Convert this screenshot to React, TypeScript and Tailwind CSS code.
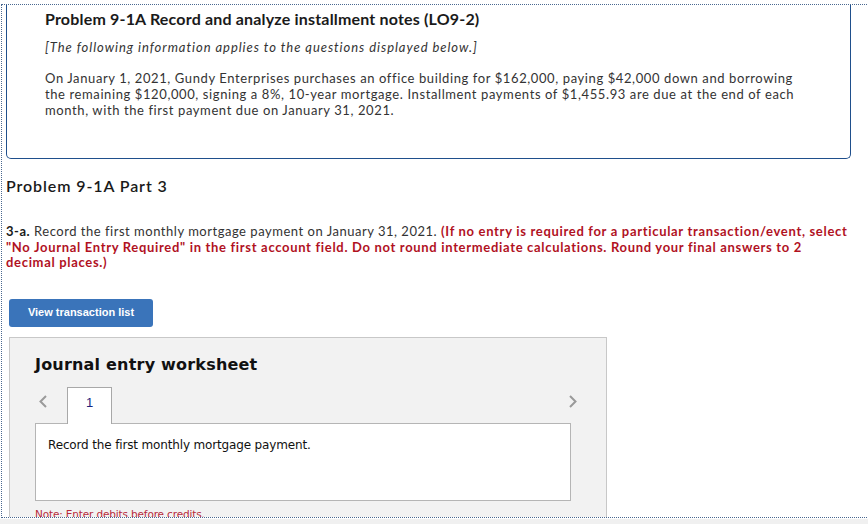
export default function App() {
  const proxima = { fontFamily: "Lato, 'Open Sans', sans-serif" };
  const verdana = { fontFamily: "'DejaVu Sans', Verdana, sans-serif" };
  return (
    <div className="w-[868px] h-[524px] overflow-hidden bg-white">
      <div className="pt-[4px] h-[519px]">
        <div
          className="ml-px w-[900px] h-[514px] overflow-hidden border-t border-l border-b border-dotted border-[#4a6890] text-[#222]"
          style={proxima}
        >
          {/* intro box */}
          <div className="ml-[4px] w-[845px] h-[154px] border-l border-r border-b border-[#1f4f8c] rounded-b-[5px] pl-[38px] pt-[4px]">
            <h2 className="text-[16px] leading-[20px] font-bold tracking-[0.18px] text-[#1a1a1a]">
              Problem 9-1A Record and analyze installment notes (LO9-2)
            </h2>
            <p className="mt-[10px] text-[13px] leading-[16px] italic tracking-[0.95px] text-[#333]">
              [The following information applies to the questions displayed below.]
            </p>
            <p className="mt-[15px] text-[13px] leading-[16px] tracking-[0.6px] text-[#333]">
              On January 1, 2021, Gundy Enterprises purchases an office building for $162,000, paying $42,000 down and borrowing
              <br />
              the remaining $120,000, signing a 8%, 10-year mortgage. Installment payments of $1,455.93 are due at the end of each
              <br />
              month, with the first payment due on January 31, 2021.
            </p>
          </div>

          <h3 className="ml-[4px] mt-[17px] text-[16px] leading-[20px] font-semibold tracking-[0.9px] text-[#1a1a1a]">
            Problem 9-1A Part 3
          </h3>

          <p className="ml-[4px] mt-[28px] text-[13px] leading-[15.5px] tracking-[0.52px] text-[#333]">
            <span className="font-bold text-[#1a1a1a]">3-a.</span> Record the first monthly mortgage payment on January 31, 2021.{" "}
            <span className="font-bold tracking-[0.68px] text-[#b1121f]">
              (If no entry is required for a particular transaction/event, select
              <br />
              "No Journal Entry Required" in the first account field. Do not round intermediate calculations. Round your final answers to 2
              <br />
              decimal places.)
            </span>
          </p>

          <button
            className="ml-[7px] mt-[28px] w-[144px] h-[28px] rounded-[3px] bg-[#3a74ba] text-white text-[11px] font-bold"
            style={{ fontFamily: "'Liberation Sans', Arial, sans-serif" }}
          >
            View transaction list
          </button>

          <div
            className="ml-[7px] mt-[10px] w-[598px] h-[200px] bg-[#f2f2f2] border border-[#c8c8c8] pl-[25px] pt-[17px]"
            style={verdana}
          >
            <h4 className="text-[16px] leading-[20px] font-bold tracking-[0.2px] text-[#111]">Journal entry worksheet</h4>
            <div className="mt-[12px] w-[536px]">
              <div className="flex h-[36px] items-start">
                <svg className="ml-[3px] mt-[8px] w-[10px] h-[13px]" viewBox="0 0 10 13" fill="none">
                  <path d="M8 1 L2.5 6.5 L8 12" stroke="#9a9a9a" strokeWidth="2" />
                </svg>
                <div
                  className="relative z-10 ml-[19px] w-[45px] h-[37px] bg-white border border-b-0 border-[#a8a8a8] flex justify-center pt-[7px] text-[13px] leading-[16px] text-[#1a237e]"
                  style={{ fontFamily: "'Liberation Sans', Arial, sans-serif" }}
                >
                  1
                </div>
                <svg className="ml-auto mr-[-7px] mt-[8px] w-[10px] h-[13px]" viewBox="0 0 10 13" fill="none">
                  <path d="M2 1 L7.5 6.5 L2 12" stroke="#9a9a9a" strokeWidth="2" />
                </svg>
              </div>
              <div className="h-[78px] bg-white border border-[#b5b5b5] pl-[12px] pt-[13px] text-[12px] leading-[16px] tracking-[-0.15px] text-[#111]">
                Record the first monthly mortgage payment.
              </div>
              <p className="mt-[6px] text-[10.5px] leading-[14px] tracking-[-0.15px] text-[#b82a3c]">
                Note: Enter debits before credits.
              </p>
            </div>
          </div>
        </div>
      </div>
      <div className="h-[5px] bg-[#f0f0f0]" />
    </div>
  );
}
